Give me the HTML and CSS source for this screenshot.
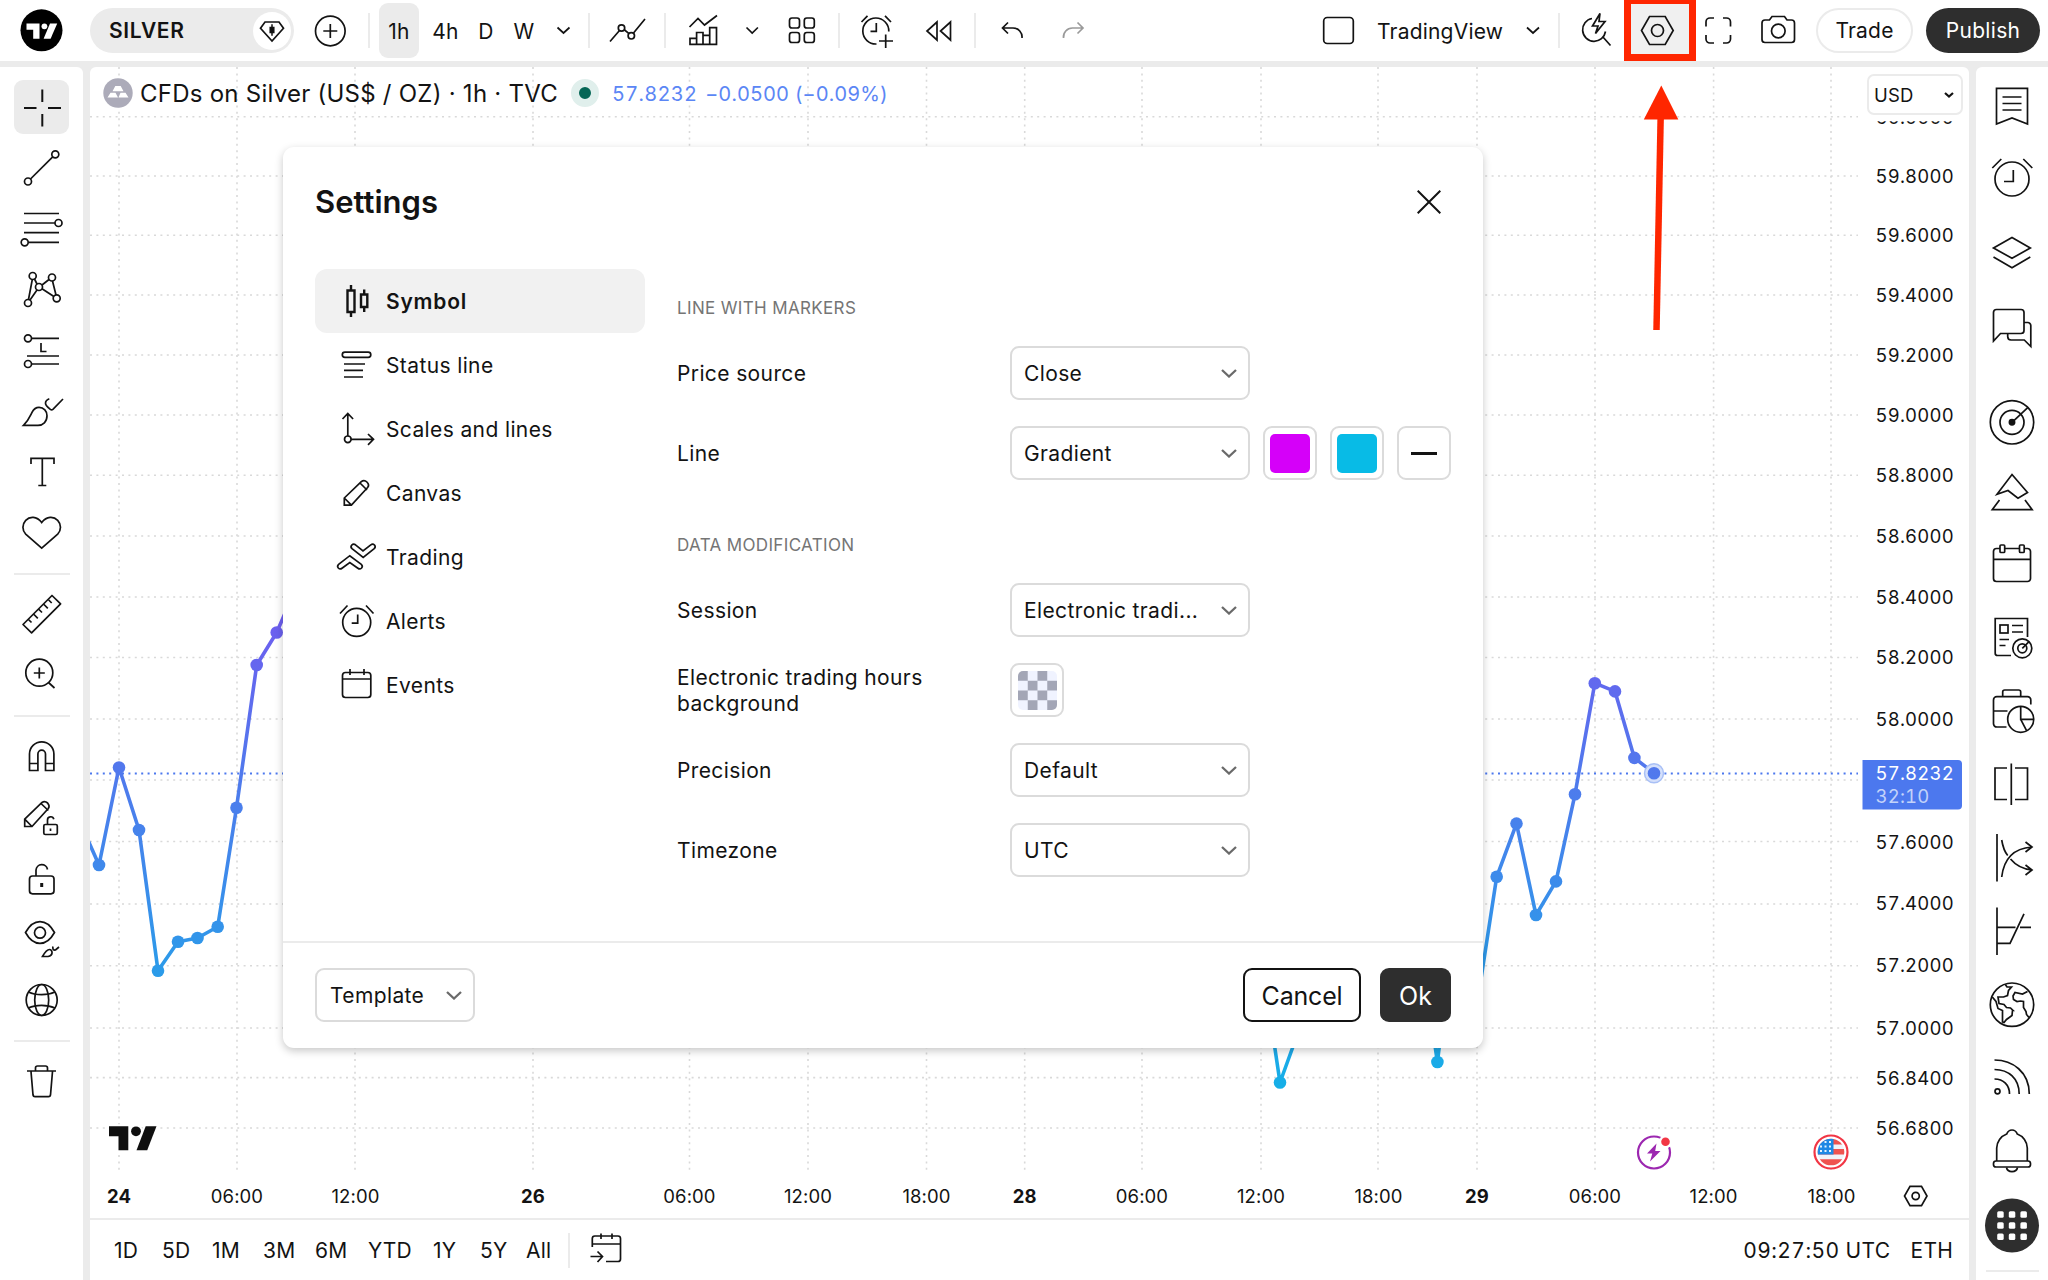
FILE: index.html
```html
<!DOCTYPE html>
<html lang="en">
<head>
<meta charset="utf-8">
<title>SILVER chart settings</title>
<link rel="stylesheet" href="styles.css">
</head>
<body>
<div class="app">
  <header class="topbar">
    <svg class="icon" width="90" height="61" viewBox="0 0 90 61"><circle cx="41.5" cy="30.3" r="21" fill="#000" stroke="none"/><g fill="#fff" stroke="none"><path d="M26.5 23.5h13v15.2h-6.3v-9h-6.7z"/><circle cx="44.4" cy="26.3" r="2.9"/><path d="M50 23.5h7.2l-6.6 15.2h-7z"/></g></svg>
    <div class="symbol"><span class="symbol-name">SILVER</span>
      <svg class="icon" width="38" height="38" viewBox="253 11.500 38 38"><circle cx="272" cy="30.500" r="19" fill="#fff" stroke="none"/><path d="M265 21.500h14l4.500 6.200L272 40.500l-11.500-12.800z"/><path d="M272 23.800v11.500" stroke-width="1.500"/><path d="M270.300 27h3.400v5h-3.400z" fill="#111"/></svg>
    </div>
    <svg class="icon" width="74" height="61" viewBox="294 0 74 61"><circle cx="330.300" cy="31" r="14.800"/><path d="M330.300 24v14M323.300 31h14"/></svg>
    <i class="vsep"></i>
    <button class="tf tf-on">1h</button><button class="tf tf-4h">4h</button><button class="tf tf-d">D</button><button class="tf tf-w">W</button>
    <svg class="icon" width="40" height="61" viewBox="548 0 40 61"><path d="M557.500 27.500l6 5.500 6-5.500"/></svg>
    <i class="vsep"></i>
    <svg class="icon" width="74" height="61" viewBox="590 0 74 61"><path d="M610 41.500l9.500-11M624 29.500l5 4.200M633.500 33l11.500-14"/><circle cx="621.500" cy="28" r="3.200"/><circle cx="631.300" cy="35.800" r="3.200"/></svg>
    <i class="vsep"></i>
    <svg class="icon" width="66" height="61" viewBox="666 0 66 61"><path d="M689.500 27l8.500-8.500 6.500 6.500 12.500-9.500M690 44.300v-6h6.600v6zM696.600 44.300V32.500h6.400v11.800zM703 44.300v-9h6.700v9zM709.700 44.300V27.700h6.800v16.600z"/></svg>
    <svg class="icon" width="40" height="61" viewBox="732 0 40 61"><path d="M746.500 27.500l5.700 5.500 5.700-5.500"/></svg>
    <svg class="icon" width="66" height="61" viewBox="772 0 66 61"><rect x="789.500" y="18" width="10" height="10" rx="2.500"/><rect x="804.300" y="18" width="10" height="10" rx="2.500"/><rect x="789.500" y="32.500" width="10" height="10" rx="2.500"/><rect x="804.300" y="32.500" width="10" height="10" rx="2.500"/></svg>
    <i class="vsep"></i>
    <svg class="icon" width="68" height="61" viewBox="840 0 68 61"><path d="M888.800 31.500A13 13 0 1 0 876.500 44M861.500 22l6-6.200M891 22l-6-6.200M876.300 23v8.300h-5.800M885.700 34.500V48M879 41h14"/></svg>
    <svg class="icon" width="66" height="61" viewBox="908 0 66 61"><path d="M937 22v18l-10-9zM950.500 22v18l-10-9z"/></svg>
    <i class="vsep"></i>
    <svg class="icon" width="66" height="61" viewBox="976 0 66 61"><path d="M1008 22.500l-5.500 5.500 5.500 5.500M1003 28h10a9 9 0 0 1 9 10"/></svg>
    <svg class="icon dim" width="62" height="61" viewBox="1042 0 62 61"><path d="M1077.500 22.500l5.500 5.500-5.500 5.500M1082.500 28h-10a9 9 0 0 0-9 10"/></svg>
    <svg class="icon push" width="56" height="61" viewBox="1310 0 56 61"><rect x="1323.700" y="17.500" width="29.600" height="26" rx="3.500"/></svg>
    <span class="layout-name">TradingView</span>
    <svg class="icon" width="42" height="61" viewBox="1516 0 42 61"><path d="M1527 27.500l6 5.500 6-5.500"/></svg>
    <i class="vsep"></i>
    <svg class="icon" width="64" height="61" viewBox="1560 0 64 61"><path d="M1592 18.500a11.500 11.500 0 1 0 13.500 13M1602.500 36.500l8 9M1600 13.500l-7.500 12.500h5.500l-2.500 7.500 9.500-12h-6z"/></svg>
    <button class="settings-btn"><svg class="icon" width="58" height="50" viewBox="1631 4 58 50"><path d="M1649.500 16.500h15.700l8 14-8 14h-15.700l-8-14z"/><circle cx="1657.500" cy="30.500" r="6"/></svg></button>
    <svg class="icon" width="48" height="61" viewBox="1696 0 48 61"><path d="M1706 26.500V22a4 4 0 0 1 4-4h4M1723 18h3.500a4 4 0 0 1 4 4v4.500M1706 35v4a4 4 0 0 0 4 4h4M1723 43h3.500a4 4 0 0 0 4-4v-4"/></svg>
    <svg class="icon" width="73" height="61" viewBox="1744 0 73 61"><path d="M1765 20h4.500l2.500-3.500h12.500l2.500 3.500h4.500a3 3 0 0 1 3 3v16.500a3 3 0 0 1-3 3H1765a3 3 0 0 1-3-3V23a3 3 0 0 1 3-3z"/><circle cx="1778.300" cy="31" r="6.800"/></svg>
    <button class="pill trade">Trade</button>
    <button class="pill publish">Publish</button>
  </header>

  <div class="body">
    <aside class="tools">
      <svg class="icon on" width="56" height="61" viewBox="14 76 56 61"><rect x="14" y="80" width="55" height="54" rx="9" fill="#ebebeb" stroke="none"/><path d="M42.300 89.500V102M42.300 114v12.500M24 108h12.500M48 108h13"/></svg>
      <svg class="icon" width="56" height="61" viewBox="14 137 56 61"><circle cx="55.300" cy="154.300" r="3.500"/><circle cx="28" cy="181.500" r="3.500"/><path d="M52.700 156.800L30.500 179"/></svg>
      <svg class="icon" width="56" height="61" viewBox="14 198 56 61"><path d="M24 213.500h35M24 223h31M24 232.700h35M28.300 242.300H59"/><circle cx="58.500" cy="223" r="3.500"/><circle cx="24.700" cy="242.300" r="3.500"/></svg>
      <svg class="icon" width="56" height="61" viewBox="14 259 56 61"><circle cx="32.700" cy="276" r="3.500"/><circle cx="52" cy="277.500" r="3.500"/><circle cx="39" cy="287" r="3.500"/><circle cx="28" cy="303" r="3.500"/><circle cx="56.700" cy="298.300" r="3.500"/><path d="M32.300 279.500L28.500 299.500M34.500 279l2.500 5M42 285l7-5.500M52.500 281l3.500 14M42 288.800l11.500 7.500M37 290l-7 10"/></svg>
      <svg class="icon" width="56" height="61" viewBox="14 320 56 61"><circle cx="28" cy="338.300" r="3.500"/><circle cx="28" cy="364" r="3.500"/><path d="M31.500 338.300H59M31.500 364H59M27 356h32M41 343v8.500h5.500"/></svg>
      <svg class="icon" width="56" height="61" viewBox="14 381 56 61"><path d="M23.500 425.300c5-5 6.500-9 8.500-13 1.700-3.300 4-5 7-5a8 8 0 0 1 8 8.500c0 6-4 9.500-9 9.500zM49.300 398.800c-2.700 1-3.800 2.700-3.800 4.500 0 2.500 3.500 5 4.800 6 .9.700 1.800.7 2.600 0L63 399"/></svg>
      <svg class="icon" width="56" height="61" viewBox="14 442 56 61"><path d="M31 464v-5.700h23V464M42.300 458.300v27.200M38.300 485.500h8"/></svg>
      <svg class="icon" width="56" height="61" viewBox="14 503 56 61"><path d="M41.700 522.500c-5-6.500-12-6.300-16-2.200-3.700 4-3.700 10 0 13.800l16 14 16-14c3.700-3.800 3.700-9.800 0-13.800-4-4.100-11-4.300-16 2.200z"/></svg>
      <i class="hsep h20"></i>
      <svg class="icon" width="56" height="60" viewBox="14 584 56 60"><path d="M52 595.500l8.600 8.400L31.600 632.800l-8.600-8.300zM28.500 619.500l3 3M34 614.500l3.800 3.800M39 609.500l3 3M44 604.500l3.800 3.800M48.700 600l3 3" stroke-linejoin="round"/></svg>
      <svg class="icon" width="56" height="60" viewBox="14 644 56 60"><circle cx="39.300" cy="672.700" r="13.500"/><path d="M39.300 667.500v11M33.800 673h11M48.500 682.500l6 5.500"/></svg>
      <i class="hsep h24"></i>
      <svg class="icon" width="56" height="61" viewBox="14 728 56 61"><path d="M29.500 770.500V754a12.200 12.200 0 0 1 24.400 0v16.500h-8.400V754a3.800 3.800 0 0 0-7.600 0v16.500zM29.500 763.500H38M45.500 763.500H54"/></svg>
      <svg class="icon" width="56" height="61" viewBox="14 789 56 61"><path d="M24.700 826.500v-7.300L42 802.500c2-1.400 4-.9 5.600.5 1.500 1.700 2 3.600.7 5.500L32 826.500zM24.700 819.200l7.300 7.300M41 803.500l7.300 7"/><rect x="43.800" y="824.500" width="13.500" height="10" rx="1.500"/><path d="M47.500 824.500v-4.300a3.200 3.200 0 0 1 6.300-1M50.500 828.500v2.500"/></svg>
      <svg class="icon" width="56" height="61" viewBox="14 850 56 61"><rect x="29.500" y="876" width="24.500" height="17.800" rx="3"/><path d="M36 876v-6a5.800 5.800 0 0 1 11.500-.5"/><path d="M41.700 883v4" stroke-width="3"/></svg>
      <svg class="icon" width="56" height="61" viewBox="14 911 56 61"><path d="M25.500 932.500c8-14.500 21-14.500 29 0-8 14.500-21 14.500-29 0z"/><circle cx="40" cy="932.700" r="5.500"/><path d="M42.500 956.500c2.500-4.500 4.500-7 7-7 3 0 4.300 6-1.500 7zM53 946.500c-.8 2.500.5 4 2.500 3.500l3.500-3"/></svg>
      <svg class="icon" width="56" height="61" viewBox="14 972 56 61"><circle cx="41.700" cy="1000" r="15.500"/><ellipse cx="41.700" cy="1000" rx="7" ry="15.500"/><path d="M28.500 992c7 3.500 19 3.500 26.400 0M28.500 1008c7-3.500 19-3.500 26.400 0"/></svg>
      <i class="hsep h16"></i>
      <svg class="icon" width="56" height="61" viewBox="14 1049 56 61"><path d="M27 1071h29M35.500 1071v-3a2 2 0 0 1 2-2h8a2 2 0 0 1 2 2v3M31 1071.500l2 23.500a2 2 0 0 0 2 1.700h13.500a2 2 0 0 0 2-1.700l2-23.500"/></svg>
    </aside>

    <main class="chart">
      <svg class="plot" width="1880" height="1151" viewBox="90 67 1880 1151">
        <defs><linearGradient id="price" gradientUnits="userSpaceOnUse" x1="0" y1="70" x2="0" y2="1158"><stop offset="0" stop-color="#d500f9"/><stop offset="1" stop-color="#08bbe6"/></linearGradient></defs>
        <path class="grid" d="M90 116.700H1858M90 176H1858M90 235.300H1858M90 295H1858M90 355H1858M90 415H1858M90 475.300H1858M90 536H1858M90 597H1858M90 657.500H1858M90 719H1858M90 780H1858M90 841.500H1858M90 904H1858M90 965.700H1858M90 1028H1858M90 1077.600H1858M90 1128H1858"/>
        <path class="grid" d="M119 67V1171M237 67V1171M355 67V1171M533 67V1171M689.500 67V1171M808 67V1171M926.500 67V1171M1024.700 67V1171M1142 67V1171M1261 67V1171M1378 67V1171M1477 67V1171M1595 67V1171M1713.600 67V1171M1831 67V1171"/>
        <path class="last" d="M90 773.500H1858"/>
        <g fill="none" stroke="url(#price)" stroke-width="3.600" stroke-linejoin="round">
          <path d="M79 820L99 865 119 767.500 139 830 158 970.700 178 941.800 197.500 938 217.700 926.700 236.500 807.700 256.700 665 276.700 632.500 296 588"/>
          <path d="M1261 955L1280 1082.500 1299 1030M1418 930L1437.400 1062 1457 905"/>
          <path d="M1477 1005L1496.700 876.800 1516.500 823.600 1536 915 1556 881.400 1575 794.300 1594.800 683.200 1615 691.400 1634.400 757.900 1654 773.200"/>
        </g>
        <circle cx="1654" cy="773.200" r="9.500" fill="#d5e0fb" stroke="#a9c0f6" stroke-width="1.500"/>
        <g fill="url(#price)">
          <circle cx="99" cy="865" r="6.300"/><circle cx="119" cy="767.500" r="6.300"/><circle cx="139" cy="830" r="6.300"/><circle cx="158" cy="970.700" r="6.300"/><circle cx="178" cy="941.800" r="6.300"/><circle cx="197.500" cy="938" r="6.300"/><circle cx="217.700" cy="926.700" r="6.300"/><circle cx="236.500" cy="807.700" r="6.300"/><circle cx="256.700" cy="665" r="6.300"/><circle cx="276.700" cy="632.500" r="6.300"/>
          <circle cx="1280" cy="1082.500" r="6.300"/><circle cx="1437.400" cy="1062" r="6.300"/><circle cx="1496.700" cy="876.800" r="6.300"/><circle cx="1516.500" cy="823.600" r="6.300"/><circle cx="1536" cy="915" r="6.300"/><circle cx="1556" cy="881.400" r="6.300"/><circle cx="1575" cy="794.300" r="6.300"/><circle cx="1594.800" cy="683.200" r="6.300"/><circle cx="1615" cy="691.400" r="6.300"/><circle cx="1634.400" cy="757.900" r="6.300"/><circle cx="1654" cy="773.200" r="6.300"/>
        </g>
        <g class="axis">
          <text x="1875.500" y="123.800">60.0000</text><path d="M1866 100H1966v21.300H1866z" fill="#fff"/><text x="1875.500" y="182.500">59.8000</text><text x="1875.500" y="242">59.6000</text><text x="1875.500" y="301.500">59.4000</text><text x="1875.500" y="361.500">59.2000</text><text x="1875.500" y="421.500">59.0000</text><text x="1875.500" y="482">58.8000</text><text x="1875.500" y="542.500">58.6000</text><text x="1875.500" y="603.500">58.4000</text><text x="1875.500" y="664">58.2000</text><text x="1875.500" y="725.800">58.0000</text><text x="1875.500" y="848.500">57.6000</text><text x="1875.500" y="910.300">57.4000</text><text x="1875.500" y="972">57.2000</text><text x="1875.500" y="1034.500">57.0000</text><text x="1875.500" y="1084.800">56.8400</text><text x="1875.500" y="1134.600">56.6800</text>
          <path d="M1862.500 760H1958a4 4 0 0 1 4 4v41.500a4 4 0 0 1-4 4h-95.500z" fill="#4c78ee"/>
          <text x="1875.500" y="780" fill="#fff">57.8232</text><text x="1875.500" y="802.500" fill="#c3d3fa">32:10</text>
        </g>
        <g class="axis time">
          <text class="day" x="119" y="1203">24</text><text x="237" y="1203">06:00</text><text x="355.500" y="1203">12:00</text><text class="day" x="533" y="1203">26</text><text x="689.500" y="1203">06:00</text><text x="808" y="1203">12:00</text><text x="926.500" y="1203">18:00</text><text class="day" x="1024.700" y="1203">28</text><text x="1142" y="1203">06:00</text><text x="1261" y="1203">12:00</text><text x="1378.500" y="1203">18:00</text><text class="day" x="1477" y="1203">29</text><text x="1595" y="1203">06:00</text><text x="1713.600" y="1203">12:00</text><text x="1831.500" y="1203">18:00</text>
        </g>
        <path d="M1910 1186.300h11.500l5.500 9.700-5.500 9.700H1910l-5.500-9.700z" fill="none" stroke="#131313" stroke-width="1.700"/><circle cx="1915.700" cy="1196" r="3.600" fill="none" stroke="#131313" stroke-width="1.700"/>
        <g fill="#0f0f0f" stroke="#fff" stroke-width="4" paint-order="stroke"><path d="M109 1126.300h19.300v24h-9.800v-14H109z"/><circle cx="136" cy="1131.300" r="4.900"/><path d="M145.700 1126.300h10.800l-9.300 24h-10.700z"/></g>
        <g><circle cx="1654" cy="1152.500" r="16" fill="#fff" stroke="#9c27b0" stroke-width="2.200"/><path d="M1656.500 1143.500l-9.500 10h5.300l-2.300 8 10.500-10.500h-5.300z" fill="#9c27b0"/><circle cx="1665.500" cy="1141.800" r="6.500" fill="#fff"/><circle cx="1665.500" cy="1141.800" r="4.300" fill="#f23645"/></g>
        <g><clipPath id="flag"><circle cx="1831" cy="1152" r="13.300"/></clipPath><circle cx="1831" cy="1152" r="16.500" fill="#fff" stroke="#f23645" stroke-width="2.200"/><g clip-path="url(#flag)"><path d="M1817 1138h28v28h-28z" fill="#f0f3fa"/><path d="M1817 1138.500h28v6h-28zM1817 1149h28v5.500h-28zM1817 1159.300h28v6.500h-28z" fill="#ef5350"/><path d="M1817 1138h16.500v16.500H1817z" fill="#1e88e5"/><path d="M1821 1141v12M1825.500 1141v12M1830 1141v12" stroke="#e3f2fd" stroke-width="2" stroke-dasharray="2 2.500"/></g></g>
      </svg>

      <div class="legend">
        <svg class="metal" width="30" height="30" viewBox="0 0 30 30"><circle cx="15" cy="15" r="14.700" fill="#acabb9"/><g fill="#fff"><path d="M12.300 8h5.400l2.800 5.300h-11zM7.500 14.800h5l2.500 4.700H4.500zM17.500 14.800h5l3 4.700H15.500z"/></g></svg>
        <span class="legend-title">CFDs on Silver (US$ / OZ) · 1h · TVC</span>
        <i class="market"></i>
        <span class="quote">57.8232</span><span class="quote change">−0.0500 (−0.09%)</span>
      </div>
      <div class="currency"><span>USD</span><svg width="10" height="8" viewBox="0 0 10 8"><path d="M1 2l4 3.500L9 2" fill="none" stroke="#131313" stroke-width="2.200"/></svg></div>

      <footer class="ranges">
        <span class="r1">1D</span><span class="r2">5D</span><span class="r3">1M</span><span class="r4">3M</span><span class="r5">6M</span><span class="r6">YTD</span><span class="r7">1Y</span><span class="r8">5Y</span><span class="r9">All</span>
        <i class="vsep"></i>
        <svg class="icon" width="72" height="60" viewBox="570 1220 72 60"><path d="M592.300 1247v-8.500a2.500 2.500 0 0 1 2.500-2.500H618a2.500 2.500 0 0 1 2.500 2.500V1259a2.500 2.500 0 0 1-2.500 2.500h-12M592.300 1244h28M601 1233.500v5.500M612 1233.500v5.500M590.500 1256.500h12M597.500 1251.500l5 5-5 5.500"/></svg>
        <span class="clock">09:27:50 UTC</span><span class="session">ETH</span>
      </footer>
    </main>

    <aside class="widgets">
      <svg class="icon" width="72" height="74" viewBox="1976 69 72 74"><path d="M1996.500 88.300h31V124l-15.500-6-15.500 6zM2002.500 97h19M2002.500 103.500h19M2002.500 110h19"/></svg>
      <svg class="icon" width="72" height="74" viewBox="1976 143 72 74"><circle cx="2012" cy="179" r="17"/><path d="M1992.300 168l9-9M2032.300 168l-9-9M2013.300 170v11.500h-9.300"/></svg>
      <svg class="icon" width="72" height="74" viewBox="1976 217 72 74"><path d="M2012 237.500l18.300 10.500-18.300 10.300-18.500-10.300zM1993.500 257l18.500 10.800 18.300-10.800"/></svg>
      <svg class="icon" width="72" height="74" viewBox="1976 291 72 74"><path d="M1993.500 341v-28.500a3 3 0 0 1 3-3H2021a3 3 0 0 1 3 3V330.500a3 3 0 0 1-3 3h-20.500zM2024 322.500h3.500a3 3 0 0 1 3.300 3V346.500l-6.500-6.500H2011a3.500 3.500 0 0 1-3.300-3.500v-3"/></svg>
      <i class="gap"></i>
      <svg class="icon" width="72" height="73" viewBox="1976 385 72 73"><circle cx="2012" cy="422.300" r="21.700"/><circle cx="2012" cy="422.300" r="12"/><circle cx="2012" cy="422.300" r="2.600" fill="#131313"/><path d="M2012 422.300l16-15"/></svg>
      <svg class="icon" width="72" height="73" viewBox="1976 458 72 73"><path d="M2012 474.500l15.500 18-9.500 5.700-10-7.700-11 3.700zM1999.500 500l-7.200 9.600h39.800L2025 500"/></svg>
      <svg class="icon" width="72" height="73" viewBox="1976 531 72 73"><path d="M2000 548.500h-3.500a3 3 0 0 0-3 3v27a3 3 0 0 0 3 3h31a3 3 0 0 0 3-3v-27a3 3 0 0 0-3-3h-3M2004.700 548.500h14.600M1993.500 559.300h37"/><rect x="2000" y="545" width="4.700" height="7.500" rx="1"/><rect x="2019.500" y="545" width="4.700" height="7.500" rx="1"/></svg>
      <svg class="icon" width="72" height="73" viewBox="1976 604 72 73"><path d="M2011 655.500h-13.500a2.300 2.300 0 0 1-2.300-2.300V618.500h32.300v18.500M2012 625.500h11M2012 632h11M1999.500 639.500h9.500M1999.500 645.500h6"/><rect x="2000" y="625" width="8" height="8"/><circle cx="2022.300" cy="648.300" r="9.500"/><circle cx="2022.300" cy="648.300" r="4.500"/><path d="M2022.300 648.300l6.500-6.500"/></svg>
      <svg class="icon" width="72" height="73" viewBox="1976 677 72 73"><path d="M2006.500 727h-9.700a3.300 3.300 0 0 1-3.300-3.300V700a3.300 3.300 0 0 1 3.300-3.300h30.700a3.300 3.300 0 0 1 3.300 3.300v4.500M2002.700 696.700V692a2 2 0 0 1 2-2h14a2 2 0 0 1 2 2v4.700M1993.500 711h14"/><circle cx="2020.700" cy="719.300" r="13"/><path d="M2020.700 706.300v13h13M2020.700 719.300l6 11.500"/></svg>
      <svg class="icon" width="72" height="73" viewBox="1976 750 72 73"><path d="M2007 768h-12v31.500h12M2015 768h12.500v31.500H2015M2011.300 763.500V805"/></svg>
      <svg class="icon" width="72" height="73" viewBox="1976 823 72 73"><path d="M1997 834v47.500M2001.700 840c1.500 9 3.500 12.500 6 15.500M2010.500 859c5 6 11 10 21.500 11M2001.700 877c2-17 10-28.500 30-30M2025.500 842l6.500 5-6.500 5M2025.500 865l6.500 5-6.500 5"/></svg>
      <svg class="icon" width="72" height="73" viewBox="1976 896 72 73"><path d="M1997 907.500V955M1997 927.300h18.500M2020 927.300h11M1997 943.300h13l14-29.500"/></svg>
      <svg class="icon" width="72" height="73" viewBox="1976 969 72 73"><circle cx="2012" cy="1004.700" r="21.700"/><path d="M2005.300 984.500l1.700 2.500h4.500l-3 3.500-1 5-4 1.500h-5.500l1 6.500 5 1 2.500 3 4 .5 2.500 2.500h-.5l-.5 5-5.500 4-2.500 3-1.500-.5v-11.500l-4.500-2-2-7-3.700-4.500M2027.500 991.500l-5 2.500-7.500-1.500-2 3.500.5 3.500 3.500 2 3.500-.5 3 .5v6l2.500 4 .5 3 2.500 3"/></svg>
      <svg class="icon" width="72" height="73" viewBox="1976 1042 72 73"><circle cx="1997.500" cy="1091.300" r="2.500"/><path d="M1994.500 1060c18 0 34.800 12 34.800 34M1994.500 1069.500c14 0 24.700 9 24.700 24.500M1994.500 1079c9 0 15 6 15 15"/></svg>
      <svg class="icon" width="72" height="73" viewBox="1976 1115 72 73"><path d="M1996.700 1161v-13a15.300 15.300 0 0 1 10-14c1-2.500 3-4 5.300-4s4.300 1.500 5.300 4a15.300 15.300 0 0 1 10 14v13"/><rect x="1993.500" y="1161" width="37" height="6" rx="2.500"/><path d="M2006.500 1167.500c1 5.500 10 5.500 11 0"/></svg>
      <svg class="icon" width="72" height="73" viewBox="1976 1188 72 73"><circle cx="2012" cy="1225.500" r="27" fill="#2e2e2e" stroke="none"/><g fill="#fff" stroke="none"><rect x="1997.200" y="1211.200" width="6.500" height="6.500" rx="1.500"/><rect x="2008.800" y="1211.200" width="6.500" height="6.500" rx="1.500"/><rect x="2020.400" y="1211.200" width="6.500" height="6.500" rx="1.500"/><rect x="1997.200" y="1222.300" width="6.500" height="6.500" rx="1.500"/><rect x="2008.800" y="1222.300" width="6.500" height="6.500" rx="1.500"/><rect x="2020.400" y="1222.300" width="6.500" height="6.500" rx="1.500"/><rect x="1997.200" y="1233.400" width="6.500" height="6.500" rx="1.500"/><rect x="2008.800" y="1233.400" width="6.500" height="6.500" rx="1.500"/><rect x="2020.400" y="1233.400" width="6.500" height="6.500" rx="1.500"/></g></svg>
      <i class="endline"></i>
    </aside>
  </div>

  <section class="dialog">
    <header class="dialog-head"><h1>Settings</h1><svg class="icon" width="24" height="24" viewBox="0 0 24 24"><path d="M.7.700l22.600 22.600M23.300.700L.7 23.300" stroke-width="2"/></svg></header>
    <div class="dialog-body">
      <nav class="tabs">
        <a class="tab tab-on"><svg class="icon" width="50" height="64" viewBox="330 269 50 64"><path d="M347.500 290.500h7v21.500h-7zM351 285v5.500M351 312v5M361 294.500h6.300V307H361zM364.200 289.500v5M364.200 307v5"/></svg><span>Symbol</span></a>
        <a class="tab"><svg class="icon" width="50" height="64" viewBox="330 333 50 64"><rect x="342.300" y="352.200" width="28.500" height="5.200" rx="2.600"/><path d="M344 364h21M344 370.300h19M344 377h19"/></svg><span>Status line</span></a>
        <a class="tab"><svg class="icon" width="50" height="64" viewBox="330 397 50 64"><circle cx="347.800" cy="439.300" r="3.300"/><path d="M347.800 436v-22.500M342.500 419l5.300-5.500 5.300 5.500M351 439.300h22.500M368 434l5.500 5.300-5.500 5.500"/></svg><span>Scales and lines</span></a>
        <a class="tab"><svg class="icon" width="50" height="64" viewBox="330 461 50 64"><path d="M344.300 505.200v-7.200l17-16.300c2-1.700 4-1.300 5.600.3 1.700 1.700 2.300 3.800.5 5.800l-16 17.400zM344.300 498l7.100 7.200M360 483l7 7"/></svg><span>Canvas</span></a>
        <a class="tab"><svg class="icon" width="50" height="64" viewBox="330 525 50 64"><path d="M351.800 545c1.200-1.200 2.600-1 3.700-.2l7.500 6.200 7.800-6.200c1.300-1 2.700-.8 3.700.2 1 1.300.8 2.700-.3 3.700l-11 8.800-11.200-8.800c-1.100-1-1.300-2.400-.2-3.700zM338.300 568c-1-1.300-.8-2.700.3-3.700l11.200-8.600 11.500 8.600c1.100 1 1.300 2.400.3 3.700-1 1-2.500 1.200-3.700.3l-8.100-5.800-7.800 5.800c-1.200.9-2.700.7-3.700-.3z"/></svg><span>Trading</span></a>
        <a class="tab"><svg class="icon" width="50" height="64" viewBox="330 589 50 64"><circle cx="356.700" cy="622.400" r="14"/><path d="M340 613.500l7.500-8M373.500 613.500l-7.500-8M357.700 614.500v8.700h-6"/></svg><span>Alerts</span></a>
        <a class="tab"><svg class="icon" width="50" height="64" viewBox="330 653 50 64"><rect x="342.500" y="672.500" width="28.300" height="25" rx="3"/><path d="M342.500 679h28.300M350 669v6M364 669v6"/></svg><span>Events</span></a>
      </nav>
      <div class="form">
        <h2>LINE WITH MARKERS</h2>
        <div class="row"><label>Price source</label><div class="select"><span>Close</span><svg class="caret" width="16" height="9" viewBox="0 0 16 9"><path d="M1 1l7 6.500L15 1"/></svg></div></div>
        <div class="row"><label>Line</label><div class="select"><span>Gradient</span><svg class="caret" width="16" height="9" viewBox="0 0 16 9"><path d="M1 1l7 6.500L15 1"/></svg></div><div class="swatch"><i class="magenta"></i></div><div class="swatch"><i class="cyan"></i></div><div class="swatch"><i class="dash"></i></div></div>
        <h2 class="second">DATA MODIFICATION</h2>
        <div class="row"><label>Session</label><div class="select"><span>Electronic tradi...</span><svg class="caret" width="16" height="9" viewBox="0 0 16 9"><path d="M1 1l7 6.500L15 1"/></svg></div></div>
        <div class="row"><label>Electronic trading hours<br>background</label><div class="swatch first"><i class="checker"></i></div></div>
        <div class="row"><label>Precision</label><div class="select"><span>Default</span><svg class="caret" width="16" height="9" viewBox="0 0 16 9"><path d="M1 1l7 6.500L15 1"/></svg></div></div>
        <div class="row"><label>Timezone</label><div class="select"><span>UTC</span><svg class="caret" width="16" height="9" viewBox="0 0 16 9"><path d="M1 1l7 6.500L15 1"/></svg></div></div>
      </div>
    </div>
    <footer class="dialog-foot">
      <button class="select template"><span>Template</span><svg class="caret" width="16" height="9" viewBox="0 0 16 9"><path d="M1 1l7 6.500L15 1"/></svg></button>
      <button class="cancel">Cancel</button><button class="ok">Ok</button>
    </footer>
  </section>

  <svg class="arrow" width="40" height="250" viewBox="1642 84 40 250"><path d="M1661.300 85.500l17 34h-34.500z" fill="#ff2600"/><path d="M1660.700 115L1656.500 330" stroke="#ff2600" stroke-width="6.500"/></svg>
</div>
</body>
</html>
```
FILE: styles.css
```css
* { box-sizing: border-box; }
body { margin: 0; }
button { font: inherit; color: inherit; background: none; border: 0; padding: 0; letter-spacing: inherit; }
.app {
  position: relative;
  width: 2048px; height: 1280px;
  overflow: hidden;
  display: flex; flex-direction: column; gap: 6px;
  background: #ebebeb;
  color: #131313;
  font: 21px/1.2 Inter, "Noto Sans", sans-serif;
  letter-spacing: .2px;
}
.icon { display: block; flex: none; fill: none; stroke: #131313; stroke-width: 1.7; }
.dim { stroke: #9a9a9a; }
.on { stroke-width: 2; }
.tab-on .icon { stroke-width: 2.4; }

/* top bar */
.topbar { height: 61px; flex: none; display: flex; align-items: center; background: #fff; padding-right: 8px; }
.symbol { width: 204px; height: 45px; border-radius: 23px; background: #ebebeb; display: flex; align-items: center; justify-content: space-between; padding: 0 3px 0 19px; }
.symbol-name { font-weight: 600; letter-spacing: .7px; padding-top: 1px; }
.vsep { width: 2px; height: 35px; background: #ebebeb; flex: none; }
.tf { height: 55px; text-align: center; padding-top: 2px; }
.tf-on { width: 40px; margin-left: 9px; border-radius: 9px; background: #ebebeb; }
.tf-4h { width: 53px; }
.tf-d { width: 28px; }
.tf-w { width: 48px; }
.push { margin-left: auto; }
.layout-name { width: 150px; padding: 2px 0 0 11px; }
.settings-btn { width: 72px; height: 61px; border: solid #ff2600; border-width: 4px 7px 7px; background: #f0f0f0; overflow: hidden; }
.pill { height: 45px; border-radius: 23px; padding-top: 1px; }
.trade { width: 97px; margin-left: -1px; border: 2px solid #ebebeb; }
.publish { width: 114px; margin-left: 13px; background: #2e2e2e; color: #fff; letter-spacing: .3px; }

/* columns */
.body { flex: 1; display: flex; gap: 7px; min-height: 0; }
.tools { width: 83px; padding: 9px 0 0 14px; background: #fff; border-radius: 0 6px 0 0; }
.hsep { display: flex; align-items: center; width: 56px; }
.hsep::before { content: ""; width: 56px; height: 2px; background: #ebebeb; }
.h20 { height: 20px; }
.h24 { height: 24px; }
.h16 { height: 16px; }
.chart { position: relative; width: 1879px; background: #fff; border-radius: 6px 6px 0 0; overflow: hidden; }
.widgets { width: 72px; padding-top: 2px; background: #fff; border-radius: 6px 0 0 0; }
.gap { display: block; height: 20px; }
.endline { display: block; width: 53px; height: 2px; margin: 9px 0 0 10px; background: #ebebeb; }

/* chart */
.plot { display: block; }
.grid { fill: none; stroke: #d9d9d9; stroke-width: 1.6; stroke-dasharray: 2 4.4; }
.last { fill: none; stroke: #4c78ee; stroke-width: 1.8; stroke-dasharray: 2 4.4; }
.axis { font-size: 18.500px; letter-spacing: .2px; fill: #131313; font-variant-numeric: tabular-nums; }
.time { text-anchor: middle; letter-spacing: .1px; font-variant-numeric: normal; }
.day { font-weight: 700; }
.legend { position: absolute; left: 13px; top: 10px; height: 31px; display: flex; align-items: center; }
.legend-title { font-size: 24px; width: 431px; margin-left: 7px; padding-top: 3px; white-space: nowrap; letter-spacing: .25px; }
.market { width: 28px; height: 28px; border-radius: 50%; background: #056656; border: 8px solid #e0efec; flex: none; }
.quote { margin-left: 13px; padding-top: 2px; font-size: 20px; color: #5b86f5; white-space: nowrap; letter-spacing: .3px; font-variant-numeric: tabular-nums; }
.change { margin-left: 8px; letter-spacing: .1px; }
.currency { position: absolute; left: 1777px; top: 7px; width: 96px; height: 41px; padding: 1px 7px 0 5px; border: 2px solid #ebebeb; border-radius: 7px; background: #fff; display: flex; align-items: center; justify-content: space-between; font-size: 18.500px; }
.ranges { height: 62px; border-top: 2px solid #ebebeb; display: flex; align-items: center; padding-left: 24px; white-space: nowrap; }
.ranges span { padding-top: 2px; }
.r1 { width: 48px; } .r2 { width: 50px; } .r3 { width: 51px; } .r4 { width: 52px; } .r5 { width: 53px; }
.r6 { width: 65px; } .r7 { width: 47px; } .r8 { width: 46px; } .r9 { width: 42px; }
.clock { margin-left: auto; font-variant-numeric: tabular-nums; letter-spacing: .4px; }
.session { margin: 0 16px 0 20px; }

/* dialog */
.dialog { position: absolute; left: 283px; top: 147px; width: 1200px; height: 901px; background: #fff; border-radius: 11px; box-shadow: 0 3px 8px rgba(0,0,0,.22); display: flex; flex-direction: column; letter-spacing: .38px; }
.dialog-head { height: 122px; display: flex; justify-content: space-between; padding: 43px 42px 0 32px; }
h1 { margin: -6px 0 0; font-size: 31px; line-height: 36px; font-weight: 600; letter-spacing: 0; }
.dialog-body { flex: 1; display: flex; }
.tabs { width: 330px; margin-left: 32px; }
.tab { display: flex; align-items: center; gap: 6px; height: 64px; padding-left: 15px; border-radius: 12px; }
.tab span { padding-top: 2px; }
.tab-on { background: #f1f1f1; font-weight: 600; letter-spacing: .8px; }
.form { margin-left: 32px; width: 780px; }
h2 { margin: 0; height: 64px; padding-top: 29px; font-size: 17px; line-height: 20px; font-weight: 400; color: #757575; letter-spacing: .35px; }
.second { height: 77px; }
h2.second { padding-top: 42px; }
.row { display: flex; align-items: center; height: 80px; }
label { width: 333px; line-height: 26.500px; padding-top: 2px; }
.select { width: 240px; height: 54px; border: 2px solid #dbdbdb; border-radius: 9px; display: flex; align-items: center; justify-content: space-between; padding: 0 11px 0 12px; }
.select span { padding-top: 2px; }
.caret path { fill: none; stroke: #6a6a6a; stroke-width: 2.300; }
.swatch { width: 54px; height: 54px; margin-left: 13px; border: 2px solid #dbdbdb; border-radius: 9px; display: flex; align-items: center; justify-content: center; }
.swatch.first { margin-left: 0; }
.swatch i { width: 40px; height: 39px; border-radius: 5px; }
.magenta { background: #d500f9; }
.cyan { background: #08bbe6; }
.swatch .dash { width: 26px; height: 3px; border-radius: 0; background: #131313; }
.swatch .checker { width: 39px; background: conic-gradient(#f0f3ff 25%, #a3a6b6 0 50%, #f0f3ff 0 75%, #a3a6b6 0) 0 0 / 19.500px 19.500px; }
.dialog-foot { height: 107px; border-top: 2px solid #ebebeb; display: flex; align-items: center; padding: 0 32px 1px; }
.template { width: 160px; padding-left: 13px; }
.cancel, .ok { height: 54px; border-radius: 9px; font-size: 25px; letter-spacing: 0; padding-top: 1px; }
.cancel { width: 118px; margin-left: auto; border: 2px solid #131313; letter-spacing: -.2px; }
.ok { width: 71px; margin-left: 19px; background: #2e2e2e; color: #fff; }

.arrow { position: absolute; left: 1642px; top: 84px; }
```
